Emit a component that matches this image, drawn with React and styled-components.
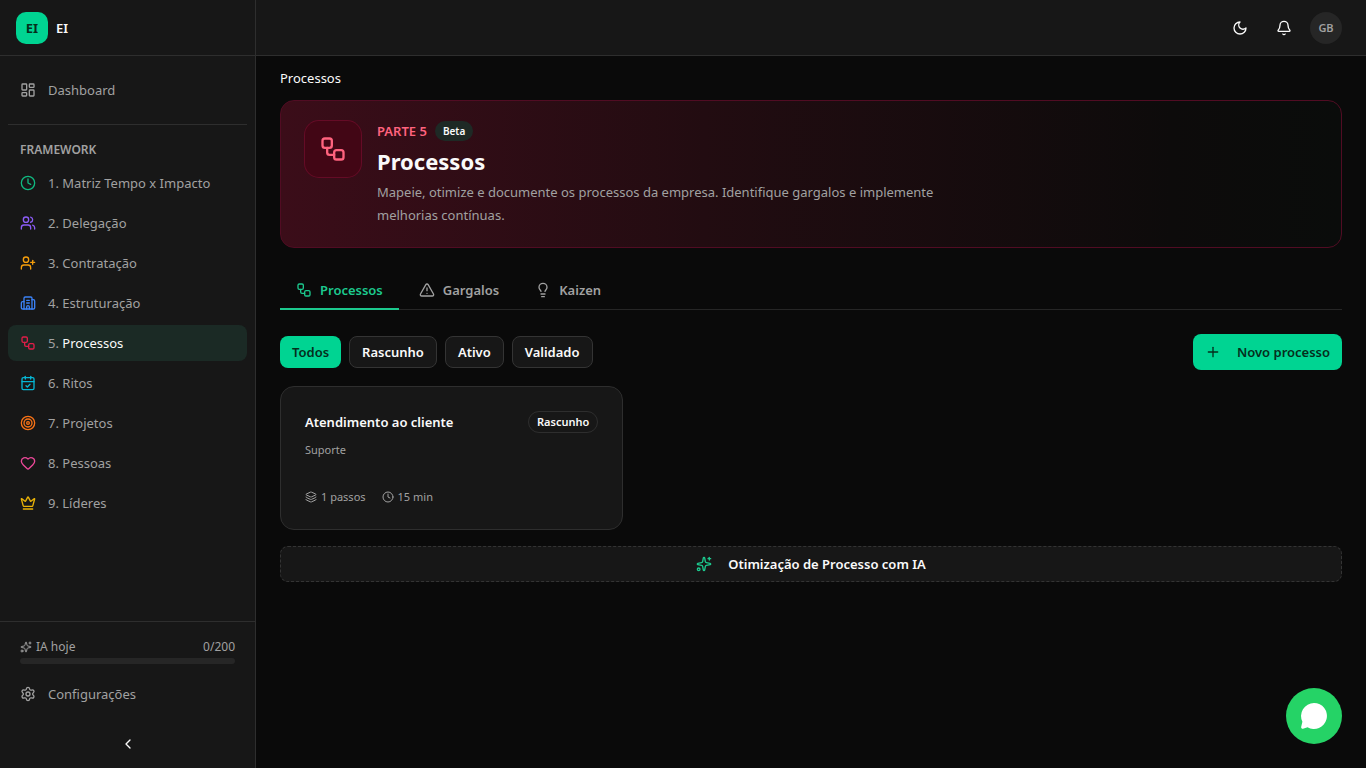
import React, { useState } from 'react';
import styled, { createGlobalStyle } from 'styled-components';
import {
    Bell,
    Building2,
    CalendarCheck,
    ChevronLeft,
    Clock,
    Crown,
    Heart,
    Layers,
    LayoutDashboard,
    Lightbulb,
    Plus,
    Settings,
    Sparkles,
    Target,
    TriangleAlert,
    UserPlus,
    Users,
    Workflow,
} from 'lucide-react';

const GlobalStyle = createGlobalStyle`
    * {
        box-sizing: border-box;
    }

    body {
        margin: 0;
        background-color: #0a0a0a;
        color: #fafafa;
        font-family: "Noto Sans", "Open Sans", sans-serif;
        font-size: 13px;
        line-height: 20px;
    }

    button {
        font: inherit;
        color: inherit;
        cursor: pointer;
    }

    h1, h2, h3, p, ul {
        margin: 0;
        padding: 0;
    }

    svg {
        flex-shrink: 0;
    }
`

const Layout = styled.div`
    display: flex;
    min-height: 100vh;
`

const Sidebar = styled.aside`
    width: 256px;
    height: 100vh;
    position: sticky;
    top: 0;
    flex-shrink: 0;
    display: flex;
    flex-direction: column;
    background-color: #171717;
    border-right: 1px solid #2e2e2e;
`

const Brand = styled.div`
    height: 56px;
    padding: 0 16px;
    display: flex;
    align-items: center;
    gap: 8px;
    border-bottom: 1px solid #2e2e2e;
    font-weight: 600;
`

const Logo = styled.span`
    width: 32px;
    height: 32px;
    border-radius: 10px;
    display: flex;
    align-items: center;
    justify-content: center;
    background-color: #00d492;
    color: #052e1c;
    font-weight: 700;
`

const Nav = styled.nav`
    flex: 1;
    padding: 16px 8px;
    overflow: hidden;
`

const NavList = styled.ul`
    list-style: none;
    display: flex;
    flex-direction: column;
    gap: 4px;
`

const NavLink = styled.a`
    height: 36px;
    padding: 0 12px;
    border-radius: 8px;
    display: flex;
    align-items: center;
    gap: 12px;
    color: ${props => props.$active ? "#fafafa" : "#a1a1a1"};
    background-color: ${props => props.$active ? "#1b2a25" : "transparent"};
    text-decoration: none;

    svg {
        color: ${props => props.$tint || "#a1a1a1"};
    }
`

const NavNumber = styled.span`
    color: #a1a1a1;
`

const Section = styled.div`
    margin-top: 16px;
    padding-top: 16px;
    border-top: 1px solid #2e2e2e;
`

const SectionTitle = styled.h2`
    padding: 0 12px;
    margin-bottom: 6px;
    color: #a1a1a1;
    font-size: 12px;
    line-height: 18px;
    font-weight: 600;
    text-transform: uppercase;
`

const SidebarFooter = styled.div`
    padding: 16px 8px 8px;
    border-top: 1px solid #2e2e2e;
`

const Usage = styled.div`
    padding: 0 12px;
    margin-bottom: 12px;
    color: #a1a1a1;
    font-size: 12px;
    line-height: 18px;
`

const UsageRow = styled.div`
    display: flex;
    justify-content: space-between;
    margin-bottom: 2px;
`

const UsageLabel = styled.span`
    display: flex;
    align-items: center;
    gap: 4px;
`

const UsageTrack = styled.div`
    height: 6px;
    border-radius: 3px;
    background-color: #262626;
    overflow: hidden;
`

const UsageFill = styled.div`
    height: 100%;
    background-color: #00d492;
`

const CollapseButton = styled.button`
    width: 100%;
    height: 32px;
    margin-top: 16px;
    padding: 0;
    display: flex;
    align-items: center;
    justify-content: center;
    border: none;
    border-radius: 8px;
    background: transparent;
`

const Content = styled.div`
    flex: 1;
    min-width: 0;
`

const Topbar = styled.header`
    height: 56px;
    padding: 0 24px;
    display: flex;
    align-items: center;
    justify-content: flex-end;
    gap: 8px;
    background-color: #171717;
    border-bottom: 1px solid #2e2e2e;
`

const IconButton = styled.button`
    width: 36px;
    height: 36px;
    padding: 0;
    display: flex;
    align-items: center;
    justify-content: center;
    border: none;
    border-radius: 8px;
    background: transparent;
`

const Avatar = styled.button`
    width: 32px;
    height: 32px;
    padding: 0;
    border: none;
    border-radius: 50%;
    background-color: #262626;
    color: #a1a1a1;
    font-size: 11px;
    font-weight: 600;
`

const Main = styled.main`
    padding: 12px 24px 24px;
`

const Crumb = styled.p`
    margin-bottom: 12px;
`

const Hero = styled.section`
    padding: 20px 24px;
    display: flex;
    align-items: flex-start;
    gap: 16px;
    border: 1px solid #510c23;
    border-radius: 14px;
    background: linear-gradient(90deg, #3b0d19 0%, #220c11 40%, #0d0b0b 84%, #0a0c0b 100%);
`

const HeroIcon = styled.div`
    width: 56px;
    height: 56px;
    flex-shrink: 0;
    display: flex;
    align-items: center;
    justify-content: center;
    border-radius: 14px;
    background-color: #420615;
    box-shadow: 0 0 0 1px #650b26;
    color: #ff637e;
`

const HeroTop = styled.div`
    display: flex;
    align-items: center;
    gap: 8px;
`

const HeroPart = styled.span`
    color: #ff637e;
    font-size: 13px;
    font-weight: 600;
    text-transform: uppercase;
`

const BetaBadge = styled.span`
    padding: 0 8px;
    border-radius: 10px;
    background-color: #1e2925;
    font-size: 10px;
    font-weight: 600;
`

const HeroTitle = styled.h1`
    margin-top: 4px;
    font-size: 22px;
    line-height: 32px;
    font-weight: 700;
`

const HeroText = styled.p`
    max-width: 576px;
    margin-top: 4px;
    color: #a1a1a1;
    line-height: 23px;
`

const Tabs = styled.div`
    margin-top: 24px;
    display: flex;
    gap: 4px;
    box-shadow: inset 0 -1px 0 #262626;
`

const Tab = styled.button`
    height: 38px;
    padding: 0 16px;
    display: flex;
    align-items: center;
    gap: 8px;
    border: none;
    border-bottom: 2px solid ${props => props.$active ? "#1cc98e" : "transparent"};
    background: transparent;
    color: ${props => props.$active ? "#1cc98e" : "#a1a1a1"};
    font-weight: 600;
`

const Toolbar = styled.div`
    margin-top: 24px;
    display: flex;
    align-items: center;
    justify-content: space-between;
`

const Filters = styled.div`
    display: flex;
    gap: 8px;
`

const FilterButton = styled.button`
    height: 32px;
    padding: 0 12px;
    border: ${props => props.$active ? "none" : "1px solid #343434"};
    border-radius: 8px;
    background-color: ${props => props.$active ? "#00d492" : "#171717"};
    color: ${props => props.$active ? "#052e1c" : "#fafafa"};
    font-weight: 600;
`

const NewButton = styled.button`
    height: 36px;
    padding: 0 12px;
    display: flex;
    align-items: center;
    gap: 16px;
    border: none;
    border-radius: 8px;
    background-color: #00d492;
    color: #052e1c;
    font-weight: 600;
`

const CardGrid = styled.div`
    margin-top: 16px;
    display: grid;
    grid-template-columns: repeat(3, 1fr);
    gap: 16px;
`

const Card = styled.article`
    padding: 24px;
    border: 1px solid #2e2e2e;
    border-radius: 14px;
    background-color: #171717;
    color: #a1a1a1;
    font-size: 11px;
    line-height: 16px;
`

const CardHead = styled.div`
    display: flex;
    align-items: center;
    justify-content: space-between;
    margin-bottom: 9px;
`

const CardTitle = styled.h3`
    color: #fafafa;
    font-size: 13px;
    line-height: 20px;
    font-weight: 600;
`

const StatusBadge = styled.span`
    padding: 2px 8px;
    border: 1px solid #2e2e2e;
    border-radius: 11px;
    color: #fafafa;
    font-weight: 600;
`

const CardMeta = styled.div`
    margin-top: 31px;
    display: flex;
    gap: 16px;
`

const MetaItem = styled.span`
    display: flex;
    align-items: center;
    gap: 4px;
`

const AiButton = styled.button`
    width: 100%;
    height: 36px;
    margin-top: 16px;
    display: flex;
    align-items: center;
    justify-content: center;
    gap: 16px;
    border: 1px dashed #343434;
    border-radius: 8px;
    background-color: #171717;
    font-weight: 600;

    svg {
        color: #1cc98e;
    }
`

const ChatButton = styled.button`
    width: 56px;
    height: 56px;
    padding: 0;
    position: fixed;
    right: 24px;
    bottom: 24px;
    display: flex;
    align-items: center;
    justify-content: center;
    border: none;
    border-radius: 50%;
    background-color: #25d366;
`

const MoonIcon = () => (
    <svg width="16" height="16" viewBox="0 0 24 24" fill="none" stroke="currentColor" strokeWidth="2" strokeLinecap="round" strokeLinejoin="round">
        <path d="M12 3a6 6 0 0 0 9 9 9 9 0 1 1-9-9Z" />
    </svg>
)

const ChatIcon = () => (
    <svg width="28" height="28" viewBox="0 0 28 28" fill="#fff">
        <path d="M14 1a13 13 0 1 1-6.500 24.300L3 26.800a1.600 1.600 0 0 1-1.800-2l1.200-5A13 13 0 0 1 14 1Z" />
    </svg>
)

const modules = [
    { id: 1, label: "Matriz Tempo x Impacto", icon: Clock, tint: "#10b981" },
    { id: 2, label: "Delegação", icon: Users, tint: "#8b5cf6" },
    { id: 3, label: "Contratação", icon: UserPlus, tint: "#f59e0b" },
    { id: 4, label: "Estruturação", icon: Building2, tint: "#3b82f6" },
    { id: 5, label: "Processos", icon: Workflow, tint: "#e11d48" },
    { id: 6, label: "Ritos", icon: CalendarCheck, tint: "#06b6d4" },
    { id: 7, label: "Projetos", icon: Target, tint: "#f97316" },
    { id: 8, label: "Pessoas", icon: Heart, tint: "#ec4899" },
    { id: 9, label: "Líderes", icon: Crown, tint: "#eab308" },
]

const tabs = [
    { label: "Processos", icon: Workflow },
    { label: "Gargalos", icon: TriangleAlert },
    { label: "Kaizen", icon: Lightbulb },
]

const filters = ["Todos", "Rascunho", "Ativo", "Validado"]

const App = () => {
    const [tab, setTab] = useState("Processos");
    const [filter, setFilter] = useState("Todos");
    const used = 0;

    return (
        <Layout>
            <GlobalStyle />
            <Sidebar>
                <Brand>
                    <Logo>EI</Logo>
                    EI
                </Brand>
                <Nav>
                    <NavLink href="#">
                        <LayoutDashboard size={16} />
                        Dashboard
                    </NavLink>
                    <Section>
                        <SectionTitle>Framework</SectionTitle>
                        <NavList>
                            {modules.map(item => (
                                <li key={item.id}>
                                    <NavLink href="#" $tint={item.tint} $active={item.id === 5}>
                                        <item.icon size={16} />
                                        <span><NavNumber>{item.id}.</NavNumber> {item.label}</span>
                                    </NavLink>
                                </li>
                            ))}
                        </NavList>
                    </Section>
                </Nav>
                <SidebarFooter>
                    <Usage>
                        <UsageRow>
                            <UsageLabel><Sparkles size={12} />IA hoje</UsageLabel>
                            <span>{used}/200</span>
                        </UsageRow>
                        <UsageTrack>
                            <UsageFill style={{ width: `${used / 2}%` }} />
                        </UsageTrack>
                    </Usage>
                    <NavLink href="#">
                        <Settings size={16} />
                        Configurações
                    </NavLink>
                    <CollapseButton aria-label="Recolher menu">
                        <ChevronLeft size={16} />
                    </CollapseButton>
                </SidebarFooter>
            </Sidebar>
            <Content>
                <Topbar>
                    <IconButton aria-label="Alternar tema"><MoonIcon /></IconButton>
                    <IconButton aria-label="Notificações"><Bell size={16} /></IconButton>
                    <Avatar>GB</Avatar>
                </Topbar>
                <Main>
                    <Crumb>Processos</Crumb>
                    <Hero>
                        <HeroIcon><Workflow size={28} /></HeroIcon>
                        <div>
                            <HeroTop>
                                <HeroPart>Parte 5</HeroPart>
                                <BetaBadge>Beta</BetaBadge>
                            </HeroTop>
                            <HeroTitle>Processos</HeroTitle>
                            <HeroText>
                                Mapeie, otimize e documente os processos da empresa. Identifique gargalos e implemente melhorias contínuas.
                            </HeroText>
                        </div>
                    </Hero>
                    <Tabs>
                        {tabs.map(item => (
                            <Tab key={item.label} $active={item.label === tab} onClick={() => setTab(item.label)}>
                                <item.icon size={16} />
                                {item.label}
                            </Tab>
                        ))}
                    </Tabs>
                    <Toolbar>
                        <Filters>
                            {filters.map(item => (
                                <FilterButton key={item} $active={item === filter} onClick={() => setFilter(item)}>
                                    {item}
                                </FilterButton>
                            ))}
                        </Filters>
                        <NewButton>
                            <Plus size={16} />
                            Novo processo
                        </NewButton>
                    </Toolbar>
                    <CardGrid>
                        <Card>
                            <CardHead>
                                <CardTitle>Atendimento ao cliente</CardTitle>
                                <StatusBadge>Rascunho</StatusBadge>
                            </CardHead>
                            <p>Suporte</p>
                            <CardMeta>
                                <MetaItem><Layers size={12} />1 passos</MetaItem>
                                <MetaItem><Clock size={12} />15 min</MetaItem>
                            </CardMeta>
                        </Card>
                    </CardGrid>
                    <AiButton>
                        <Sparkles size={16} />
                        Otimização de Processo com IA
                    </AiButton>
                </Main>
            </Content>
            <ChatButton aria-label="Abrir conversa">
                <ChatIcon />
            </ChatButton>
        </Layout>
    );
};

export default App;
